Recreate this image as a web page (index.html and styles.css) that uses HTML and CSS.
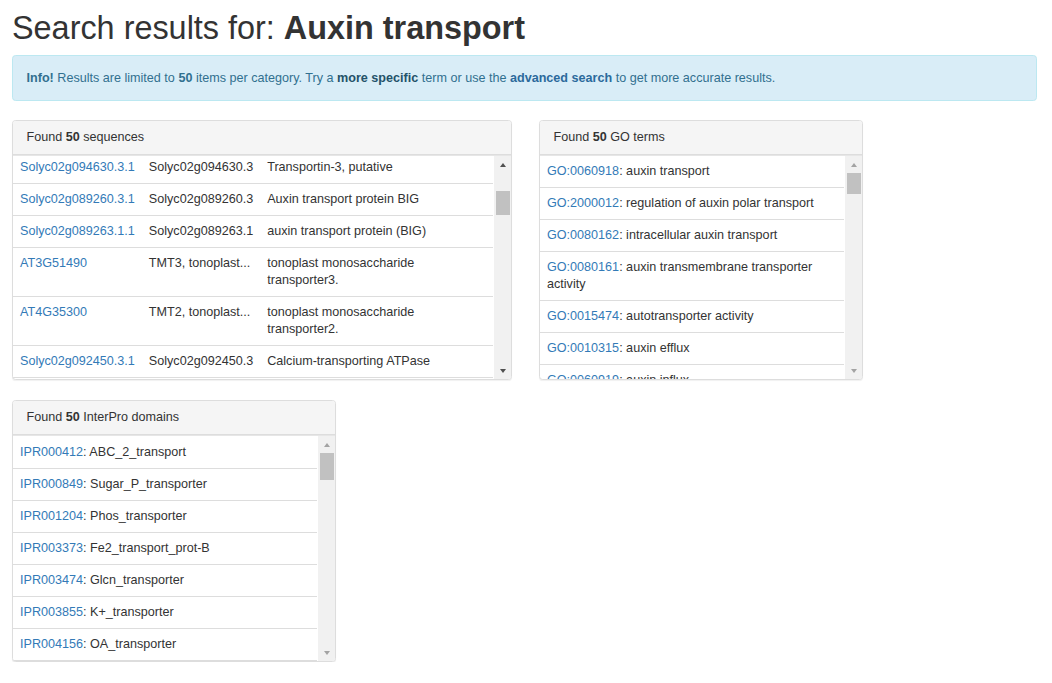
FILE: index.html
```html
<!DOCTYPE html>
<html lang="en">
<head>
<meta charset="utf-8">
<title>Search results</title>
<link rel="stylesheet" href="styles.css">
</head>
<body>
<div class="page">
  <h1 class="title">Search results for: <strong>Auxin transport</strong></h1>

  <div class="alert">
    <strong>Info!</strong> Results are limited to <strong>50</strong> items per category. Try a <a class="alert-link" href="#">more specific</a> term or use the <a class="alert-link adv" href="#">advanced search</a> to get more accurate results.
  </div>

  <div class="panels">
    <div class="panel panel-seq">
      <div class="panel-heading">Found <strong>50</strong> sequences</div>
      <div class="panel-body">
        <div class="list">
          <table class="seq-table">
            <tbody>
              <tr class="first"><td><a href="#">Solyc02g094630.3.1</a></td><td>Solyc02g094630.3</td><td>Transportin-3, putative</td></tr>
              <tr><td><a href="#">Solyc02g089260.3.1</a></td><td>Solyc02g089260.3</td><td>Auxin transport protein BIG</td></tr>
              <tr><td><a href="#">Solyc02g089263.1.1</a></td><td>Solyc02g089263.1</td><td>auxin transport protein (BIG)</td></tr>
              <tr><td><a href="#">AT3G51490</a></td><td>TMT3, tonoplast...</td><td>tonoplast monosaccharide transporter3.</td></tr>
              <tr><td><a href="#">AT4G35300</a></td><td>TMT2, tonoplast...</td><td>tonoplast monosaccharide transporter2.</td></tr>
              <tr><td><a href="#">Solyc02g092450.3.1</a></td><td>Solyc02g092450.3</td><td>Calcium-transporting ATPase</td></tr>
            </tbody>
          </table>
        </div>
        <div class="sb sb-active">
          <div class="sb-btn"><span class="arrow-up"></span></div>
          <div class="sb-track"><div class="sb-thumb thumb-seq"></div></div>
          <div class="sb-btn"><span class="arrow-down"></span></div>
        </div>
      </div>
    </div>

    <div class="panel panel-go">
      <div class="panel-heading">Found <strong>50</strong> GO terms</div>
      <div class="panel-body">
        <div class="list">
          <ul class="items">
            <li><a href="#">GO:0060918</a>: auxin transport</li>
            <li><a href="#">GO:2000012</a>: regulation of auxin polar transport</li>
            <li><a href="#">GO:0080162</a>: intracellular auxin transport</li>
            <li><a href="#">GO:0080161</a>: auxin transmembrane transporter activity</li>
            <li><a href="#">GO:0015474</a>: autotransporter activity</li>
            <li><a href="#">GO:0010315</a>: auxin efflux</li>
            <li><a href="#">GO:0060919</a>: auxin influx</li>
          </ul>
        </div>
        <div class="sb">
          <div class="sb-btn"><span class="arrow-up"></span></div>
          <div class="sb-track"><div class="sb-thumb thumb-go"></div></div>
          <div class="sb-btn"><span class="arrow-down"></span></div>
        </div>
      </div>
    </div>

    <div class="panel panel-ipr">
      <div class="panel-heading">Found <strong>50</strong> InterPro domains</div>
      <div class="panel-body">
        <div class="list">
          <ul class="items">
            <li><a href="#">IPR000412</a>: ABC_2_transport</li>
            <li><a href="#">IPR000849</a>: Sugar_P_transporter</li>
            <li><a href="#">IPR001204</a>: Phos_transporter</li>
            <li><a href="#">IPR003373</a>: Fe2_transport_prot-B</li>
            <li><a href="#">IPR003474</a>: Glcn_transporter</li>
            <li><a href="#">IPR003855</a>: K+_transporter</li>
            <li><a href="#">IPR004156</a>: OA_transporter</li>
          </ul>
        </div>
        <div class="sb">
          <div class="sb-btn"><span class="arrow-up"></span></div>
          <div class="sb-track"><div class="sb-thumb thumb-ipr"></div></div>
          <div class="sb-btn"><span class="arrow-down"></span></div>
        </div>
      </div>
    </div>
  </div>
</div>
</body>
</html>
```

FILE: styles.css
```css
* { box-sizing: border-box; }

html, body {
  margin: 0;
  padding: 0;
  background: #fff;
}

body {
  font-family: "Liberation Sans", Arial, Helvetica, sans-serif;
  font-size: 12.6px;
  line-height: 17px;
  color: #333;
}

a {
  color: #337ab7;
  text-decoration: none;
}

.page {
  padding: 0 15px 0 12px;
}

.title {
  margin: 10px 0 9px;
  font-size: 32.4px;
  line-height: 36px;
  font-weight: 500;
  color: #333;
}

.title strong {
  font-weight: 700;
}

.alert {
  padding: 12.5px 13.5px 13.5px;
  line-height: 18px;
  margin-bottom: 19px;
  background: #d9edf7;
  border: 1px solid #bce8f1;
  border-radius: 3.6px;
  color: #31708f;
}

.alert strong {
  font-weight: 700;
}

.alert-link {
  color: #245269;
  font-weight: 700;
}

.alert-link.adv {
  color: #2b6a9c;
}

.panels {
  display: grid;
  grid-template-columns: 500px 324px;
  column-gap: 27px;
  row-gap: 20px;
  align-items: start;
}

.panel {
  border: 1px solid #ddd;
  border-radius: 3.6px;
  background: #fff;
  box-shadow: 0 1px 1px rgba(0, 0, 0, 0.06);
  overflow: hidden;
}

.panel-ipr {
  grid-column: 1;
  width: 324px;
}

.panel-heading {
  padding: 7.5px 13.5px 8.5px;
  line-height: 17px;
  background: #f5f5f5;
  border-bottom: 1px solid #ddd;
  color: #333;
}

.panel-heading strong {
  font-weight: 700;
}

.panel-body {
  display: flex;
  height: 224px;
  border-top: 1px solid #e6e6e6;
}

.panel-ipr .panel-body {
  height: 226px;
}

.list {
  flex: 1;
  min-width: 0;
  overflow: hidden;
  padding-right: 1px;
}

.seq-table {
  width: 100%;
  border-collapse: collapse;
}

.seq-table td {
  padding: 7px 7px;
  line-height: 17px;
  vertical-align: top;
  border-bottom: 1px solid #ddd;
  white-space: normal;
}

.seq-table td:first-child,
.seq-table td:nth-child(2) {
  white-space: nowrap;
}

.seq-table tr.first td {
  padding-top: 3px;
}

.items {
  list-style: none;
  margin: 0;
  padding: 0;
}

.items li {
  padding: 7px 7px;
  line-height: 17px;
  border-bottom: 1px solid #ddd;
}

.panel-ipr .items li:first-child {
  padding-top: 8px;
}

/* scrollbar drawn as an element */
.sb {
  width: 17px;
  flex: 0 0 17px;
  background: #f1f1f1;
  display: flex;
  flex-direction: column;
}

.sb-btn {
  height: 17px;
  flex: 0 0 17px;
  display: flex;
  align-items: center;
  justify-content: center;
}

.arrow-up,
.arrow-down {
  width: 0;
  height: 0;
  border-left: 3.5px solid transparent;
  border-right: 3.5px solid transparent;
}

.arrow-up {
  border-bottom: 4px solid #a3a3a3;
}

.arrow-down {
  border-top: 4px solid #a3a3a3;
}

.sb-active .arrow-up { border-bottom-color: #505050; }
.sb-active .arrow-down { border-top-color: #505050; }

.sb-track {
  flex: 1;
  display: flex;
  flex-direction: column;
}

.sb-thumb {
  margin-left: 2px;
  margin-right: 1px;
  background: #c1c1c1;
}

.thumb-seq { margin-top: 18px; height: 24px; }
.thumb-go { margin-top: 0; height: 21px; }
.thumb-ipr { margin-top: 0; height: 27px; }
```
